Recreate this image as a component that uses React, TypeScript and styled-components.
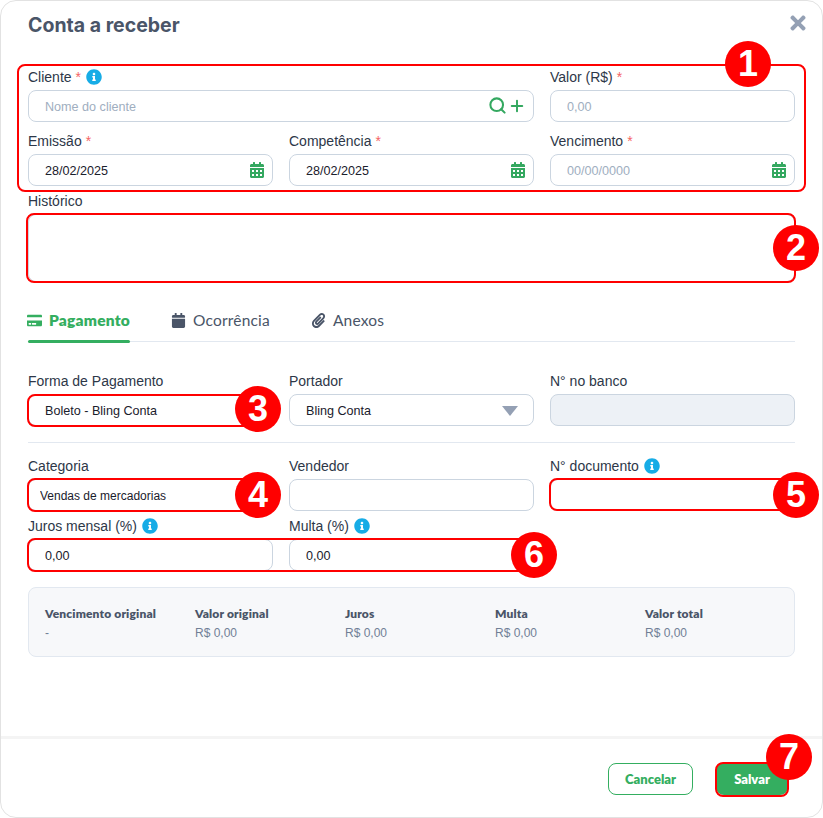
import React from "react";
import styled, { createGlobalStyle } from "styled-components";
import { FaCalendar, FaCalendarAlt, FaCreditCard, FaInfoCircle, FaPaperclip, FaTimes } from "react-icons/fa";
import { FiPlus, FiSearch } from "react-icons/fi";

const GlobalStyle = createGlobalStyle`
  html, body {
    margin: 0;
    padding: 0;
    background: #fff;
  }
  * {
    box-sizing: border-box;
  }
`;

const App = () => {
  return (
    <>
      <GlobalStyle />
      <Modal>
        <Header>
          <Title>Conta a receber</Title>
          <Close>
            <FaTimes size={22} />
          </Close>
        </Header>
        <Body>
          <Annotated>
            <Mark $top={-3} $right={-11} $bottom={-6} $left={-11} />
            <Badge $top={-26} $right={24}>1</Badge>
            <Grid>
              <Field $span={2}>
                <Label>
                  Cliente <Req>*</Req> <InfoIcon />
                </Label>
                <InputWrap>
                  <Input placeholder="Nome do cliente" />
                  <Actions>
                    <FiSearch size={19} strokeWidth={2.6} />
                    <FiPlus size={18} strokeWidth={2.6} />
                  </Actions>
                </InputWrap>
              </Field>
              <Field>
                <Label>
                  Valor (R$) <Req>*</Req>
                </Label>
                <Input placeholder="0,00" />
              </Field>
              <DateField label="Emissão" value="28/02/2025" />
              <DateField label="Competência" value="28/02/2025" />
              <DateField label="Vencimento" value="" />
            </Grid>
          </Annotated>

          <History>
            <Label>Histórico</Label>
            <Annotated>
              <Mark $top={-1} $right={-1} $bottom={-1} $left={-2} />
              <Badge $top={11} $right={-24}>2</Badge>
              <TextArea />
            </Annotated>
          </History>

          <Tabs>
            <Tab $active>
              <FaCreditCard size={15} />
              Pagamento
            </Tab>
            <Tab>
              <FaCalendar size={15} />
              Ocorrência
            </Tab>
            <Tab>
              <FaPaperclip size={15} />
              Anexos
            </Tab>
          </Tabs>

          <Grid>
            <Field>
              <Label>Forma de Pagamento</Label>
              <Annotated>
                <Mark $top={0} $right={0} $bottom={-1} $left={-1} />
                <Badge $top={-8} $right={-8}>3</Badge>
                <Input defaultValue="Boleto - Bling Conta" />
              </Annotated>
            </Field>
            <Field>
              <Label>Portador</Label>
              <InputWrap>
                <Input defaultValue="Bling Conta" />
                <Caret />
              </InputWrap>
            </Field>
            <Field>
              <Label>N° no banco</Label>
              <Input disabled />
            </Field>
          </Grid>

          <Divider />

          <Grid>
            <Field>
              <Label>Categoria</Label>
              <Annotated>
                <Mark $top={-1} $right={0} $bottom={-1} $left={-1} />
                <Badge $top={-7} $right={-8}>4</Badge>
                <Input $compact defaultValue="Vendas de mercadorias" />
              </Annotated>
            </Field>
            <Field>
              <Label>Vendedor</Label>
              <Input />
            </Field>
            <Field>
              <Label>
                N° documento <InfoIcon />
              </Label>
              <Annotated>
                <Mark $top={-1} $right={0} $bottom={0} $left={-1} />
                <Badge $top={-7} $right={-24}>5</Badge>
                <Input />
              </Annotated>
            </Field>
          </Grid>

          <LastRow>
            <Field>
              <Label>
                Juros mensal (%) <InfoIcon />
              </Label>
              <Input defaultValue="0,00" />
            </Field>
            <Field>
              <Label>
                Multa (%) <InfoIcon />
              </Label>
              <Input defaultValue="0,00" />
            </Field>
            <Mark $top={22} $right={260} $bottom={-1} $left={-1} />
            <Badge $top={16} $right={238}>6</Badge>
          </LastRow>

          <Summary>
            <SummaryItem title="Vencimento original" value="-" />
            <SummaryItem title="Valor original" value="R$ 0,00" />
            <SummaryItem title="Juros" value="R$ 0,00" />
            <SummaryItem title="Multa" value="R$ 0,00" />
            <SummaryItem title="Valor total" value="R$ 0,00" />
          </Summary>
        </Body>
        <Footer>
          <CancelButton>Cancelar</CancelButton>
          <Annotated>
            <Mark $top={-1} $right={-1} $bottom={-2} $left={-1} />
            <Badge $top={-29} $right={-24}>7</Badge>
            <SaveButton>Salvar</SaveButton>
          </Annotated>
        </Footer>
      </Modal>
    </>
  );
};

const DateField = ({ label, value }: { label: string; value: string }) => (
  <Field>
    <Label>
      {label} <Req>*</Req>
    </Label>
    <InputWrap>
      <Input defaultValue={value} placeholder="00/00/0000" />
      <DateIcon>
        <FaCalendarAlt size={16} />
      </DateIcon>
    </InputWrap>
  </Field>
);

const SummaryItem = ({ title, value }: { title: string; value: string }) => (
  <div>
    <SummaryTitle>{title}</SummaryTitle>
    <SummaryValue>{value}</SummaryValue>
  </div>
);

export default App;

const heading = `"Lato", "Open Sans", sans-serif`;
const text = `"Liberation Sans", Arial, sans-serif`;

const Modal = styled.div`
  width: 823px;
  height: 818px;
  display: flex;
  flex-direction: column;
  background: #fff;
  border: 1px solid #e2e2e2;
  border-radius: 16px;
  font-family: ${text};
  overflow: hidden;
`;

const Header = styled.div`
  height: 66px;
  padding: 14px 15px 0 27px;
  display: flex;
  justify-content: space-between;
  align-items: flex-start;
`;

const Title = styled.h2`
  margin: 0;
  font-family: "Inter", sans-serif;
  font-size: 19.5px;
  line-height: 20px;
  font-weight: 700;
  color: #4a5568;
`;

const Close = styled.div`
  color: #94a0b4;
  line-height: 0;
  margin: -3px -2px 0 0;
`;

const Body = styled.div`
  flex: 1;
  padding: 0 27px;
`;

const Annotated = styled.div`
  position: relative;
`;

const Mark = styled.div<{ $top: number; $right: number; $bottom: number; $left: number }>`
  position: absolute;
  top: ${(p) => p.$top}px;
  right: ${(p) => p.$right}px;
  bottom: ${(p) => p.$bottom}px;
  left: ${(p) => p.$left}px;
  border: 2px solid #ff0000;
  border-radius: 8px;
  pointer-events: none;
  z-index: 1;
`;

const Badge = styled.div<{ $top: number; $right: number }>`
  position: absolute;
  top: ${(p) => p.$top}px;
  right: ${(p) => p.$right}px;
  width: 46px;
  height: 46px;
  border-radius: 50%;
  background: #ff0000;
  color: #fff;
  font-family: ${text};
  font-size: 36px;
  font-weight: 700;
  display: flex;
  align-items: center;
  justify-content: center;
  z-index: 2;
`;

const Grid = styled.div`
  display: grid;
  grid-template-columns: repeat(3, 245px);
  column-gap: 16px;
  row-gap: 9px;
`;

const Field = styled.div<{ $span?: number }>`
  min-width: 0;
  grid-column: span ${(p) => p.$span || 1};
`;

const Label = styled.label`
  height: 20px;
  margin-bottom: 3px;
  display: flex;
  align-items: center;
  gap: 4px;
  font-size: 14px;
  color: #2d3748;
`;

const Req = styled.span`
  color: #f56565;
`;

const InfoWrap = styled.span`
  color: #17ace6;
  display: inline-flex;
  margin-left: 1px;
`;

const InfoIcon = () => (
  <InfoWrap>
    <FaInfoCircle size={16} />
  </InfoWrap>
);

const Input = styled.input<{ $compact?: boolean }>`
  display: block;
  width: 100%;
  height: 32px;
  padding: 1px ${(p) => (p.$compact ? "11px" : "16px")} 0;
  border: 1px solid #cbd5e0;
  border-radius: 8px;
  outline: none;
  background: #fff;
  font-family: ${text};
  font-size: ${(p) => (p.$compact ? "12px" : "12.6px")};
  color: #1a202c;

  &::placeholder {
    color: #a0aec0;
  }
  &:disabled {
    background: #edf1f6;
  }
`;

const InputWrap = styled.div`
  position: relative;
`;

const Actions = styled.div`
  position: absolute;
  top: 6px;
  right: 8px;
  display: flex;
  align-items: center;
  gap: 1px;
  color: #34a860;
`;

const DateIcon = styled.div`
  position: absolute;
  top: 8px;
  right: 8px;
  line-height: 0;
  color: #34a860;
`;

const Caret = styled.div`
  position: absolute;
  top: 12px;
  right: 16px;
  width: 0;
  height: 0;
  border-left: 8.5px solid transparent;
  border-right: 8.5px solid transparent;
  border-top: 10px solid #94a0b4;
`;

const History = styled.div`
  margin-top: 5px;
`;

const TextArea = styled.textarea`
  display: block;
  width: 100%;
  height: 68px;
  border: 1px solid #cbd5e0;
  border-radius: 8px;
  outline: none;
  resize: none;
`;

const Tabs = styled.div`
  height: 60px;
  margin-bottom: 29px;
  padding-top: 26px;
  display: flex;
  gap: 41px;
  border-bottom: 1px solid #e2e8f0;
`;

const Tab = styled.div<{ $active?: boolean }>`
  position: relative;
  height: 35px;
  padding-top: 2px;
  display: flex;
  align-items: flex-start;
  gap: 7px;
  font-family: ${heading};
  font-size: 15.5px;
  letter-spacing: 0.2px;
  line-height: 20px;
  font-weight: ${(p) => (p.$active ? 800 : 400)};
  color: ${(p) => (p.$active ? "#34ae60" : "#4a5568")};

  svg {
    margin-top: 3px;
    ${(p) => p.$active && "margin-left: -1px;"}
  }

  ${(p) =>
    p.$active &&
    `
    &::after {
      content: "";
      position: absolute;
      left: 0;
      right: 0;
      bottom: 0;
      height: 3px;
      border-radius: 2px;
      background: #34ae60;
    }
  `}
`;

const Divider = styled.div`
  height: 1px;
  margin: 16px 0 13px;
  background: #e2e8f0;
`;

const LastRow = styled(Grid)`
  position: relative;
  margin-top: 5px;
`;

const Summary = styled.div`
  height: 70px;
  margin-top: 16px;
  padding: 17px 16px 0;
  display: grid;
  grid-template-columns: repeat(5, 150px);
  background: #f7f8fa;
  border: 1px solid #e2e8f0;
  border-radius: 8px;
`;

const SummaryTitle = styled.div`
  margin-bottom: 1px;
  font-family: ${heading};
  font-size: 12px;
  letter-spacing: 0.15px;
  line-height: 18px;
  font-weight: 800;
  color: #4a5568;
`;

const SummaryValue = styled.div`
  font-size: 12px;
  line-height: 18px;
  color: #718096;
`;

const Footer = styled.div`
  height: 81px;
  padding: 24px 34px 0 0;
  display: flex;
  justify-content: flex-end;
  align-items: flex-start;
  gap: 23px;
  border-top: 3px solid #f4f4f4;
`;

const CancelButton = styled.button`
  width: 85px;
  height: 32px;
  border: 1px solid #34ae60;
  border-radius: 8px;
  background: #fff;
  color: #34ae60;
  font-family: ${heading};
  font-size: 13px;
  font-weight: 800;
`;

const SaveButton = styled.button`
  display: block;
  width: 72px;
  height: 32px;
  border: 0;
  border-radius: 8px;
  background: #34ae60;
  color: #fff;
  font-family: ${heading};
  font-size: 13px;
  font-weight: 800;
`;
